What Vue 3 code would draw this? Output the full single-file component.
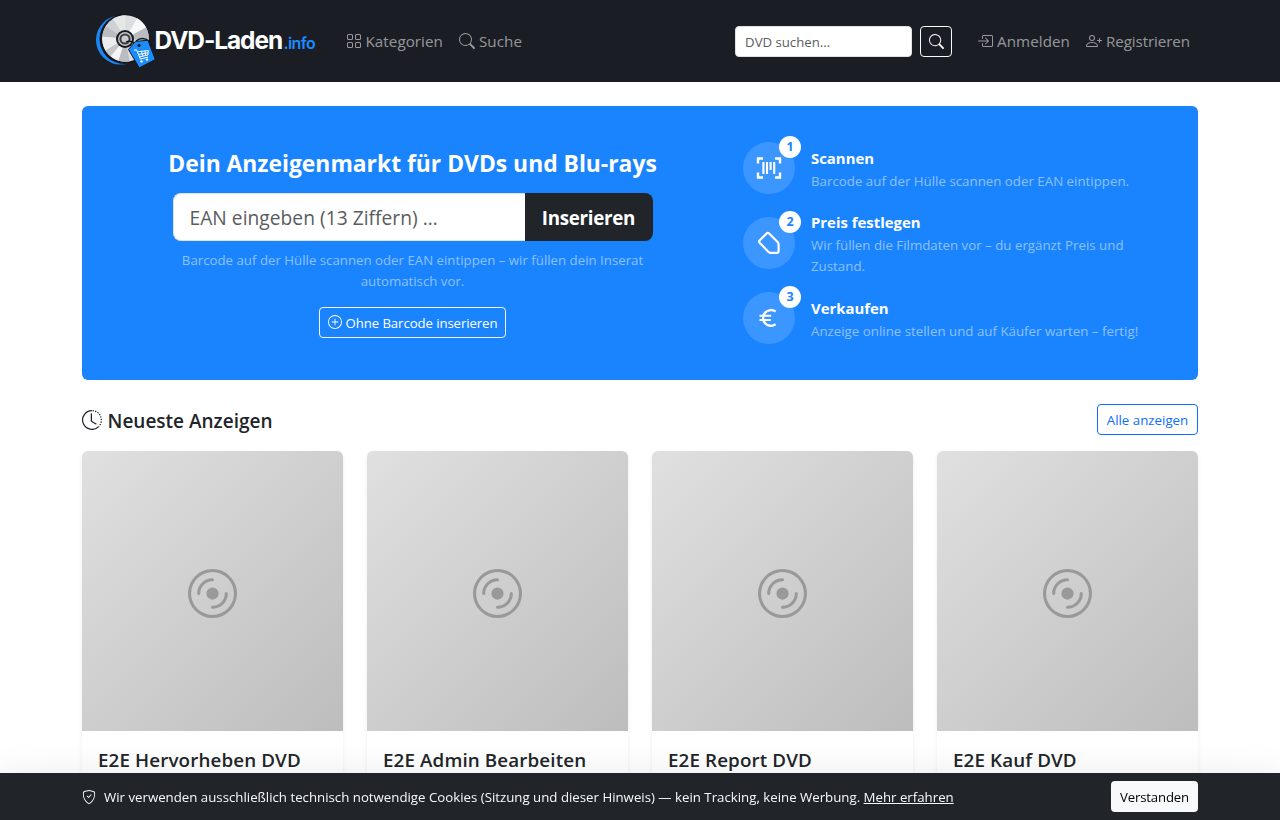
<template>
  <div class="page">
    <header class="navbar">
      <div class="container navbar-inner">
        <a class="brand" href="#">
          <svg class="logo" width="248" height="56" viewBox="0 0 248 56">
            <circle cx="38.5" cy="27" r="24.5" fill="#1a87f5" />
            <circle cx="42.5" cy="26" r="25" fill="#14171d" />
            <circle cx="43.5" cy="25.5" r="23.3" fill="#dcdde0" />
            <path v-for="(s, i) in discSlices" :key="i" :d="s.d" :fill="s.fill" />
            <circle cx="43" cy="26" r="9" fill="#171a20" />
            <circle cx="43" cy="26" r="7" fill="#c3c5c8" />
            <circle cx="43" cy="26" r="5.6" fill="#3a3d43" />
            <circle cx="43" cy="26" r="3.6" fill="#c9cbce" />
            <path d="M44 29C49 26 53 31 57 34M54 28c5-4 9-3 13 0c4 3 2 6-1 4" fill="none" stroke="#14171d" stroke-width="1.4" />
            <path d="M46.5 36.5l7-8.2 12.5-1 7.3 19.2-16 8.4z" fill="#1a8cfb" stroke="#14171d" stroke-width="1" stroke-linejoin="round" />
            <circle cx="57" cy="32.3" r="1.6" fill="#14202f" />
            <path d="M52 37.2l2.5-.4 3.9 9.3 7.8-2M55.5 38.8l10.8-1.3-.4 4.5-8.6 2M59.5 38.4l1.4 4.8M63 38l.7 4.3M56.5 41.5l9.5-1.7" fill="none" stroke="#fff" stroke-width="1" />
            <circle cx="59.5" cy="48.4" r="1.2" fill="#fff" />
            <circle cx="65" cy="46.6" r="1.2" fill="#fff" />
            <text class="logo-name" x="72.6" y="36.4">DVD-Laden</text>
            <text class="logo-tld" x="201.4" y="36.4">.info</text>
          </svg>
        </a>
        <nav class="nav-left">
          <a class="nav-link" href="#">
            <svg class="icon" viewBox="0 0 16 16"><path :d="icons.grid" /></svg>
            <span>Kategorien</span>
          </a>
          <a class="nav-link" href="#">
            <svg class="icon" viewBox="0 0 16 16"><path :d="icons.search" /></svg>
            <span>Suche</span>
          </a>
        </nav>
        <form class="search" @submit.prevent>
          <input v-model="query" class="search-input" type="text" placeholder="DVD suchen..." />
          <button class="search-btn" type="submit" aria-label="Suchen">
            <svg class="icon" viewBox="0 0 16 16"><path :d="icons.search" /></svg>
          </button>
        </form>
        <nav class="nav-right">
          <a class="nav-link" href="#">
            <svg class="icon" viewBox="0 0 16 16"><path :d="icons.login" /></svg>
            <span>Anmelden</span>
          </a>
          <a class="nav-link register" href="#">
            <svg class="icon" viewBox="0 0 16 16"><path :d="icons.personPlus" /></svg>
            <span>Registrieren</span>
          </a>
        </nav>
      </div>
    </header>

    <main class="container">
      <section class="hero">
        <div class="hero-form">
          <h1>Dein Anzeigenmarkt für DVDs und Blu-rays</h1>
          <form class="ean-group" @submit.prevent>
            <input v-model="ean" class="ean-input" type="text" placeholder="EAN eingeben (13 Ziffern) …" />
            <button class="ean-btn" type="submit">Inserieren</button>
          </form>
          <p class="hero-hint">Barcode auf der Hülle scannen oder EAN eintippen – wir füllen dein Inserat<br />automatisch vor.</p>
          <a class="btn-outline-light" href="#">
            <svg class="icon" viewBox="0 0 16 16"><path :d="icons.plusCircle" /></svg>
            <span>Ohne Barcode inserieren</span>
          </a>
        </div>

        <ol class="steps">
          <li v-for="(step, i) in steps" :key="step.title" class="step">
            <div class="step-icon">
              <svg v-if="step.icon === 'scan'" width="26" height="24" viewBox="0 0 26 24" fill="none" stroke="#fff">
                <path d="M2 7.5V2.5h5M19 2.5h5v5M2 16.5v5h5M19 21.5h5v-5" stroke-width="2.4" />
                <path d="M7.4 6v12M11 6v12M14.6 6v8M18.2 6v12" stroke-width="2.1" />
              </svg>
              <svg v-else-if="step.icon === 'tag'" width="26" height="26" viewBox="0 0 26 26" fill="none" stroke="#fff">
                <path d="M10.5 3.6L3.8 10.2Q2.4 11.6 3.8 13L12.6 22Q13.5 22.9 14.8 22.9H20.8Q22.6 22.9 22.6 21V14.5Q22.6 13 21.6 12L13.1 3.5Q11.8 2.3 10.5 3.6Z" stroke-width="2.2" stroke-linejoin="round" />
              </svg>
              <svg v-else width="26" height="26" viewBox="0 0 26 26" fill="none" stroke="#fff">
                <path d="M19.6 6.5A7.9 7.9 0 1 0 19.6 19.3" stroke-width="2.3" />
                <path d="M3.5 10.7h11.7M3.5 15h11.2" stroke-width="1.9" />
              </svg>
              <span class="step-number">{{ i + 1 }}</span>
            </div>
            <div class="step-text">
              <strong>{{ step.title }}</strong>
              <p>{{ step.text }}</p>
            </div>
          </li>
        </ol>
      </section>

      <div class="section-head">
        <h2>
          <svg class="icon" viewBox="0 0 16 16" fill="none" stroke="currentColor">
            <path d="M8 .5a7.5 7.5 0 1 0 5.3 12.8" />
            <path d="M8.5.5a7.5 7.5 0 0 1 4.8 12.8" stroke-dasharray="1 1.05" />
            <path d="M7.5 3v6l3.7 2.15" stroke-linecap="round" stroke-linejoin="round" />
          </svg>
          <span>Neueste Anzeigen</span>
        </h2>
        <a class="btn-outline-primary" href="#">Alle anzeigen</a>
      </div>

      <div class="cards">
        <article v-for="title in listings" :key="title" class="card">
          <div class="card-cover">
            <svg viewBox="0 0 16 16"><path :d="icons.disc" /></svg>
          </div>
          <div class="card-body">
            <h3>{{ title }}</h3>
          </div>
        </article>
      </div>
    </main>

    <div v-if="showCookies" class="cookie-bar">
      <div class="container cookie-inner">
        <svg class="icon" viewBox="0 0 16 16"><path :d="icons.shield" /></svg>
        <p>Wir verwenden ausschließlich technisch notwendige Cookies (Sitzung und dieser Hinweis) — kein Tracking, keine Werbung. <a href="#">Mehr erfahren</a></p>
        <button class="cookie-btn" @click="showCookies = false">Verstanden</button>
      </div>
    </div>
  </div>
</template>

<script setup>
import { ref } from 'vue';

const query = ref('');
const ean = ref('');
const showCookies = ref(true);

const steps = [
  { icon: 'scan', title: 'Scannen', text: 'Barcode auf der Hülle scannen oder EAN eintippen.' },
  { icon: 'tag', title: 'Preis festlegen', text: 'Wir füllen die Filmdaten vor – du ergänzt Preis und Zustand.' },
  { icon: 'euro', title: 'Verkaufen', text: 'Anzeige online stellen und auf Käufer warten – fertig!' }
];

const listings = ['E2E Hervorheben DVD', 'E2E Admin Bearbeiten', 'E2E Report DVD', 'E2E Kauf DVD'];

// Lichtreflexe der Disc im Logo: Startwinkel, Endwinkel, Farbe
const slice = (from, to, fill) => {
  const point = (deg) => {
    const rad = (deg * Math.PI) / 180;
    return `${(43.5 + 23.3 * Math.cos(rad)).toFixed(2)} ${(25.5 + 23.3 * Math.sin(rad)).toFixed(2)}`;
  };
  return { d: `M43.5 25.5L${point(from)}A23.3 23.3 0 0 1 ${point(to)}Z`, fill };
};

const discSlices = [
  slice(-60, -28, '#f8f8f9'),
  slice(-28, 5, '#b9bcc0'),
  slice(80, 108, '#b9bcc0'),
  slice(108, 130, '#f4f4f5'),
  slice(130, 150, '#c4c6ca'),
  slice(150, 185, '#ececee'),
  slice(185, 212, '#b9bcc0'),
  slice(212, 238, '#cfd1d4'),
  slice(238, 270, '#e6e7e9')
];

const icons = {
  grid: 'M1 2.5A1.5 1.5 0 0 1 2.5 1h3A1.5 1.5 0 0 1 7 2.5v3A1.5 1.5 0 0 1 5.5 7h-3A1.5 1.5 0 0 1 1 5.5zM2.5 2a.5.5 0 0 0-.5.5v3a.5.5 0 0 0 .5.5h3a.5.5 0 0 0 .5-.5v-3a.5.5 0 0 0-.5-.5zm6.5.5A1.5 1.5 0 0 1 10.5 1h3A1.5 1.5 0 0 1 15 2.5v3A1.5 1.5 0 0 1 13.5 7h-3A1.5 1.5 0 0 1 9 5.5zm1.5-.5a.5.5 0 0 0-.5.5v3a.5.5 0 0 0 .5.5h3a.5.5 0 0 0 .5-.5v-3a.5.5 0 0 0-.5-.5zM1 10.5A1.5 1.5 0 0 1 2.5 9h3A1.5 1.5 0 0 1 7 10.5v3A1.5 1.5 0 0 1 5.5 15h-3A1.5 1.5 0 0 1 1 13.5zm1.5-.5a.5.5 0 0 0-.5.5v3a.5.5 0 0 0 .5.5h3a.5.5 0 0 0 .5-.5v-3a.5.5 0 0 0-.5-.5zm6.5.5A1.5 1.5 0 0 1 10.5 9h3a1.5 1.5 0 0 1 1.5 1.5v3a1.5 1.5 0 0 1-1.5 1.5h-3A1.5 1.5 0 0 1 9 13.5zm1.5-.5a.5.5 0 0 0-.5.5v3a.5.5 0 0 0 .5.5h3a.5.5 0 0 0 .5-.5v-3a.5.5 0 0 0-.5-.5z',
  search: 'M11.742 10.344a6.5 6.5 0 1 0-1.397 1.398h-.001q.044.06.098.115l3.85 3.85a1 1 0 0 0 1.415-1.414l-3.85-3.85a1 1 0 0 0-.115-.1zM12 6.5a5.5 5.5 0 1 1-11 0 5.5 5.5 0 0 1 11 0',
  login: 'M6 3.5a.5.5 0 0 1 .5-.5h8a.5.5 0 0 1 .5.5v9a.5.5 0 0 1-.5.5h-8a.5.5 0 0 1-.5-.5v-2a.5.5 0 0 0-1 0v2A1.5 1.5 0 0 0 6.5 14h8a1.5 1.5 0 0 0 1.5-1.5v-9A1.5 1.5 0 0 0 14.5 2h-8A1.5 1.5 0 0 0 5 3.5v2a.5.5 0 0 0 1 0zM11.854 8.354a.5.5 0 0 0 0-.708l-3-3a.5.5 0 1 0-.708.708L10.293 7.5H1.5a.5.5 0 0 0 0 1h8.793l-2.147 2.146a.5.5 0 0 0 .708.708z',
  personPlus: 'M6 8a3 3 0 1 0 0-6 3 3 0 0 0 0 6m2-3a2 2 0 1 1-4 0 2 2 0 0 1 4 0m4 8c0 1-1 1-1 1H1s-1 0-1-1 1-4 6-4 6 3 6 4m-1-.004c-.001-.246-.154-.986-.832-1.664C9.516 10.68 8.289 10 6 10s-3.516.68-4.168 1.332c-.678.678-.83 1.418-.832 1.664zM13.5 5a.5.5 0 0 1 .5.5V7h1.5a.5.5 0 0 1 0 1H14v1.5a.5.5 0 0 1-1 0V8h-1.5a.5.5 0 0 1 0-1H13V5.5a.5.5 0 0 1 .5-.5',
  plusCircle: 'M8 15A7 7 0 1 1 8 1a7 7 0 0 1 0 14m0 1A8 8 0 1 0 8 0a8 8 0 0 0 0 16M8 4a.5.5 0 0 1 .5.5v3h3a.5.5 0 0 1 0 1h-3v3a.5.5 0 0 1-1 0v-3h-3a.5.5 0 0 1 0-1h3v-3A.5.5 0 0 1 8 4',
  disc: 'M8 15A7 7 0 1 1 8 1a7 7 0 0 1 0 14m0 1A8 8 0 1 0 8 0a8 8 0 0 0 0 16M10 8a2 2 0 1 1-4 0 2 2 0 0 1 4 0M8 4a4 4 0 0 0-4 4 .5.5 0 0 1-1 0 5 5 0 0 1 5-5 .5.5 0 0 1 0 1m4.5 3.5a.5.5 0 0 1 .5.5 5 5 0 0 1-5 5 .5.5 0 0 1 0-1 4 4 0 0 0 4-4 .5.5 0 0 1 .5-.5',
  shield: 'M5.338 1.59a61 61 0 0 0-2.837.856.48.48 0 0 0-.328.39c-.554 4.157.726 7.19 2.253 9.188a10.7 10.7 0 0 0 2.287 2.233c.346.244.652.42.893.533q.18.085.293.118a1 1 0 0 0 .101.025 1 1 0 0 0 .1-.025q.114-.034.294-.118c.24-.113.547-.29.893-.533a10.7 10.7 0 0 0 2.287-2.233c1.527-1.997 2.807-5.031 2.253-9.188a.48.48 0 0 0-.328-.39c-.651-.213-1.75-.56-2.837-.855C9.552 1.29 8.531 1.067 8 1.067c-.53 0-1.552.223-2.662.524zM5.072.56C6.157.265 7.31 0 8 0s1.843.265 2.928.56c1.11.3 2.229.655 2.887.87a1.54 1.54 0 0 1 1.044 1.262c.596 4.477-.787 7.795-2.465 9.99a11.8 11.8 0 0 1-2.517 2.453 7 7 0 0 1-1.048.625c-.28.132-.581.24-.829.24s-.548-.108-.829-.24a7 7 0 0 1-1.048-.625 11.8 11.8 0 0 1-2.517-2.453C1.928 10.487.545 7.169 1.141 2.692A1.54 1.54 0 0 1 2.185 1.43 63 63 0 0 1 5.072.56M10.854 5.146a.5.5 0 0 1 0 .708l-3 3a.5.5 0 0 1-.708 0l-1.5-1.5a.5.5 0 1 1 .708-.708L7.5 7.793l2.646-2.647a.5.5 0 0 1 .708 0'
};
</script>

<style>
body {
  margin: 0;
  background: #fff;
  overflow: hidden;
}
</style>

<style scoped>
.page {
  height: 820px;
  overflow: hidden;
  font-family: 'Segoe UI', 'Open Sans', 'Noto Sans', sans-serif;
  font-size: 15.2px;
  line-height: 24px;
  color: #212529;
}

.page * {
  box-sizing: border-box;
}

a {
  color: inherit;
  text-decoration: none;
}

h1,
h2,
h3,
p,
ol {
  margin: 0;
  padding: 0;
}

input,
button {
  font-family: inherit;
}

.icon {
  flex: none;
  width: 1em;
  height: 1em;
  fill: currentColor;
}

.container {
  width: 1140px;
  margin: 0 auto;
  padding: 0 12px;
  box-sizing: border-box;
}

.navbar {
  height: 82px;
  background: #1a1d24;
}

.navbar-inner {
  display: flex;
  align-items: center;
  height: 100%;
}

.brand {
  display: flex;
  width: 255.5px;
}

.logo {
  display: block;
}

.logo-name,
.logo-tld {
  font-family: Inter, sans-serif;
  font-weight: 700;
  font-size: 24.4px;
  letter-spacing: -1.05px;
  fill: #fff;
}

.logo-tld {
  font-weight: 600;
  font-size: 16px;
  letter-spacing: -0.55px;
  fill: #1a8cff;
}

.nav-left,
.nav-right {
  display: flex;
}

.nav-link {
  display: flex;
  align-items: center;
  gap: 4px;
  padding: 8px;
  color: rgba(255, 255, 255, 0.55);
  letter-spacing: 0.05px;
}

.nav-link.register {
  letter-spacing: -0.1px;
}

.nav-link .icon {
  width: 16px;
  height: 16px;
}

.search {
  display: flex;
  gap: 8px;
  margin-left: auto;
  margin-right: 17px;
}

.search-input {
  width: 177px;
  height: 31px;
  padding: 5px 8px 4px 9px;
  border: 1px solid #dee2e6;
  border-radius: 4px;
  font-size: 13.2px;
  outline: none;
}

.search-input::placeholder,
.ean-input::placeholder {
  color: #595c5f;
  opacity: 1;
}

.search-btn {
  display: flex;
  align-items: center;
  justify-content: center;
  width: 32px;
  height: 31px;
  padding: 0;
  border: 1px solid #f8f9fa;
  border-radius: 4px;
  background: transparent;
  color: #f8f9fa;
}

.search-btn .icon {
  width: 15px;
  height: 15px;
}

.hero {
  display: flex;
  align-items: center;
  height: 274px;
  margin-top: 24px;
  border-radius: 6px;
  background: #1a84ff;
  color: #fff;
}

.hero-form {
  display: flex;
  flex-direction: column;
  align-items: center;
  width: 661px;
}

.hero-form h1 {
  margin-bottom: 15px;
  font-size: 22.85px;
  font-weight: 700;
  line-height: 29px;
  white-space: nowrap;
}

.ean-group {
  display: flex;
  width: 480px;
  height: 48px;
}

.ean-input {
  flex: 1;
  min-width: 0;
  padding: 9px 16px 8px;
  border: 1px solid #dee2e6;
  border-right: 0;
  border-radius: 8px 0 0 8px;
  font-size: 19.2px;
  letter-spacing: 0.03px;
  outline: none;
}

.ean-btn {
  width: 128px;
  padding: 2px 0 0;
  border: 0;
  border-radius: 0 8px 8px 0;
  background: #212529;
  color: #fff;
  font-size: 18.8px;
  font-weight: 700;
  letter-spacing: -0.3px;
}

.hero-hint {
  margin: 9px 0 15px;
  font-size: 13.25px;
  line-height: 21px;
  text-align: center;
  white-space: nowrap;
  color: rgba(255, 255, 255, 0.5);
}

.btn-outline-light {
  display: flex;
  align-items: center;
  justify-content: center;
  gap: 4px;
  width: 187px;
  height: 31px;
  border: 1px solid #f8f9fa;
  border-radius: 4px;
  font-size: 13.2px;
  letter-spacing: -0.08px;
  white-space: nowrap;
}

.btn-outline-light span {
  padding-top: 1px;
}

.btn-outline-light .icon {
  width: 14px;
  height: 14px;
}

.steps {
  display: flex;
  flex-direction: column;
  gap: 16px;
  list-style: none;
}

.step {
  display: flex;
  align-items: center;
  gap: 16px;
}

.step-icon {
  position: relative;
  display: flex;
  align-items: center;
  justify-content: center;
  width: 52px;
  height: 52px;
  border-radius: 50%;
  background: rgba(255, 255, 255, 0.15);
}

.step-number {
  position: absolute;
  top: -6px;
  right: -6px;
  width: 22px;
  height: 22px;
  border-radius: 50%;
  background: #fff;
  color: #1a84ff;
  font-size: 12.5px;
  font-weight: 700;
  line-height: 22px;
  text-align: center;
}

.step-text {
  width: 345px;
}

.step-text strong {
  display: block;
  font-size: 14.9px;
  font-weight: 700;
}

.step-text p {
  margin: 1px 0 -1px;
  font-size: 13.3px;
  line-height: 21px;
  color: rgba(255, 255, 255, 0.5);
}

.section-head {
  display: flex;
  align-items: center;
  justify-content: space-between;
  height: 31px;
  margin: 24px 0 16px;
}

.section-head h2 {
  display: flex;
  align-items: center;
  gap: 5.5px;
  font-size: 19px;
  font-weight: 600;
}

.section-head h2 span {
  padding-top: 2px;
}

.section-head .icon {
  width: 20px;
  height: 20px;
  fill: none;
}

.btn-outline-primary {
  width: 101px;
  height: 31px;
  border: 1px solid #0d6efd;
  border-radius: 4px;
  color: #0d6efd;
  font-size: 13.3px;
  line-height: 30px;
  text-align: center;
}

.cards {
  display: grid;
  grid-template-columns: repeat(4, 1fr);
  gap: 24px;
}

.card {
  height: 420px;
  border-radius: 6px;
  background: #fff;
  box-shadow: 0 2px 4px rgba(0, 0, 0, 0.075);
  overflow: hidden;
}

.card-cover {
  display: flex;
  align-items: center;
  justify-content: center;
  height: 280px;
  padding: 4px 0 0;
  background: linear-gradient(135deg, #e0e0e0, #bdbdbd);
  color: #999;
}

.card-cover svg {
  width: 49px;
  height: 49px;
  fill: currentColor;
}

.card-body {
  padding: 17px 16px 16px;
}

.card-body h3 {
  font-size: 18.8px;
  font-weight: 600;
  letter-spacing: 0.12px;
  white-space: nowrap;
}

.cookie-bar {
  position: fixed;
  right: 0;
  bottom: 0;
  left: 0;
  height: 47px;
  background: #212529;
  color: #f8f9fa;
  box-shadow: 0 16px 48px rgba(0, 0, 0, 0.175);
}

.cookie-inner {
  display: flex;
  align-items: center;
  height: 100%;
  font-size: 13.25px;
}

.cookie-inner .icon {
  width: 14px;
  height: 14px;
  margin-right: 8px;
}

.cookie-inner p {
  white-space: nowrap;
}

.cookie-inner a {
  text-decoration: underline;
}

.cookie-btn {
  width: 87px;
  height: 31px;
  margin-left: auto;
  padding: 0;
  border: 0;
  border-radius: 4px;
  background: #f8f9fa;
  color: #000;
  font-size: 13.2px;
  letter-spacing: -0.15px;
}
</style>
